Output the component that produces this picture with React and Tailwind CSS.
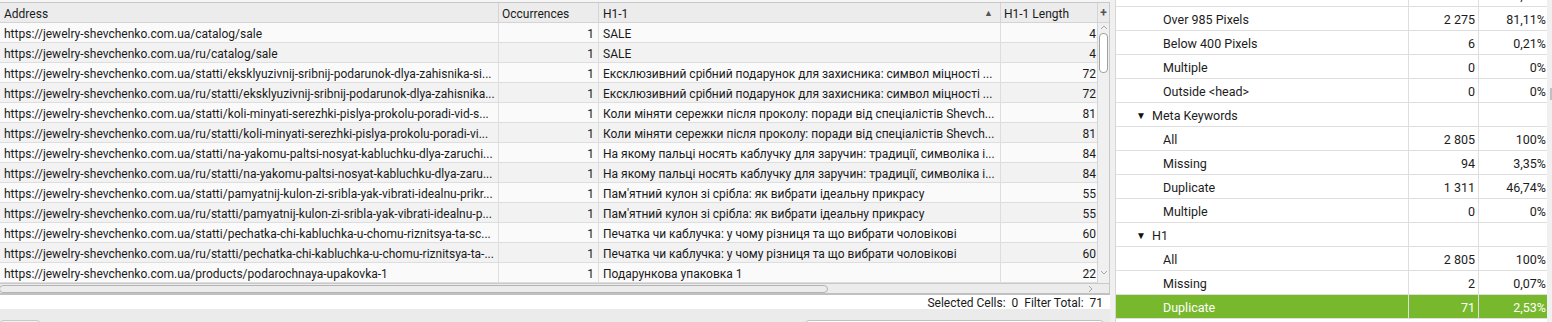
import React from "react";

const rows = [
  ["https://jewelry-shevchenko.com.ua/catalog/sale", "SALE", 4],
  ["https://jewelry-shevchenko.com.ua/ru/catalog/sale", "SALE", 4],
  ["https://jewelry-shevchenko.com.ua/statti/eksklyuzivnij-sribnij-podarunok-dlya-zahisnika-si...", "Ексклюзивний срібний подарунок для захисника: символ міцності ...", 72],
  ["https://jewelry-shevchenko.com.ua/ru/statti/eksklyuzivnij-sribnij-podarunok-dlya-zahisnika...", "Ексклюзивний срібний подарунок для захисника: символ міцності ...", 72],
  ["https://jewelry-shevchenko.com.ua/statti/koli-minyati-serezhki-pislya-prokolu-poradi-vid-s...", "Коли міняти сережки після проколу: поради від спеціалістів Shevch...", 81],
  ["https://jewelry-shevchenko.com.ua/ru/statti/koli-minyati-serezhki-pislya-prokolu-poradi-vi...", "Коли міняти сережки після проколу: поради від спеціалістів Shevch...", 81],
  ["https://jewelry-shevchenko.com.ua/statti/na-yakomu-paltsi-nosyat-kabluchku-dlya-zaruchi...", "На якому пальці носять каблучку для заручин: традиції, символіка і...", 84],
  ["https://jewelry-shevchenko.com.ua/ru/statti/na-yakomu-paltsi-nosyat-kabluchku-dlya-zaru...", "На якому пальці носять каблучку для заручин: традиції, символіка і...", 84],
  ["https://jewelry-shevchenko.com.ua/statti/pamyatnij-kulon-zi-sribla-yak-vibrati-idealnu-prikr...", "Пам'ятний кулон зі срібла: як вибрати ідеальну прикрасу", 55],
  ["https://jewelry-shevchenko.com.ua/ru/statti/pamyatnij-kulon-zi-sribla-yak-vibrati-idealnu-p...", "Пам'ятний кулон зі срібла: як вибрати ідеальну прикрасу", 55],
  ["https://jewelry-shevchenko.com.ua/statti/pechatka-chi-kabluchka-u-chomu-riznitsya-ta-sc...", "Печатка чи каблучка: у чому різниця та що вибрати чоловікові", 60],
  ["https://jewelry-shevchenko.com.ua/ru/statti/pechatka-chi-kabluchka-u-chomu-riznitsya-ta-...", "Печатка чи каблучка: у чому різниця та що вибрати чоловікові", 60],
  ["https://jewelry-shevchenko.com.ua/products/podarochnaya-upakovka-1", "Подарункова упаковка 1", 22],
];

const stats = [
  { label: "", count: "", pct: "0,00%", type: "child" },
  { label: "Over 985 Pixels", count: "2 275", pct: "81,11%", type: "child" },
  { label: "Below 400 Pixels", count: "6", pct: "0,21%", type: "child" },
  { label: "Multiple", count: "0", pct: "0%", type: "child" },
  { label: "Outside <head>", count: "0", pct: "0%", type: "child" },
  { label: "Meta Keywords", count: "", pct: "", type: "group" },
  { label: "All", count: "2 805", pct: "100%", type: "child" },
  { label: "Missing", count: "94", pct: "3,35%", type: "child" },
  { label: "Duplicate", count: "1 311", pct: "46,74%", type: "child" },
  { label: "Multiple", count: "0", pct: "0%", type: "child" },
  { label: "H1", count: "", pct: "", type: "group" },
  { label: "All", count: "2 805", pct: "100%", type: "child" },
  { label: "Missing", count: "2", pct: "0,07%", type: "child" },
  { label: "Duplicate", count: "71", pct: "2,53%", type: "child", selected: true },
];

const Chevron = ({ dir }) => {
  const d = {
    up: "M1 5 L4 2 L7 5",
    down: "M1 2 L4 5 L7 2",
    right: "M2 1 L5 4 L2 7",
  }[dir];
  return (
    <svg width="8" height="8" viewBox="0 0 8 8" className="block">
      <path d={d} fill="none" stroke="#a8a8a8" strokeWidth="1" />
    </svg>
  );
};

export default function App() {
  return (
    <div
      className="w-[1552px] h-[322px] overflow-hidden flex bg-[#f0f0f0] text-[#1a1a1a] text-[12px] leading-none"
      style={{ fontFamily: "Roboto, 'Noto Sans', Arial, sans-serif" }}
    >
      {/* LEFT PANEL */}
      <div className="w-[1110px] shrink-0 flex flex-col">
        <div className="h-[2px] bg-[#f5f5f5]" />
        <div className="border-t border-[#c8c8c8] border-r flex flex-col">
          <div className="flex">
            {/* Columns */}
            <div className="w-[1097px] shrink-0 flex flex-col">
              {/* Header */}
              <div className="h-[20px] flex bg-[#ececec] border-b border-[#d4d4d4]">
                <div className="w-[499px] shrink-0 border-r border-[#d4d4d4] px-[4px] pt-[2px] flex items-center">Address</div>
                <div className="w-[100px] shrink-0 border-r border-[#d4d4d4] px-[3px] pt-[2px] flex items-center">Occurrences</div>
                <div className="w-[402px] shrink-0 border-r border-[#d4d4d4] pl-[4px] pr-[7px] pt-[2px] flex items-center justify-between">
                  <span>H1-1</span>
                  <span className="text-[9px] text-[#555]">▲</span>
                </div>
                <div className="w-[96px] shrink-0 px-[3px] pt-[2px] flex items-center">H1-1 Length</div>
              </div>
              {/* Rows */}
              {rows.map((r, i) => (
                <div
                  key={i}
                  className={`h-[20px] flex border-b border-[#dedede] ${i % 2 === 0 ? "bg-[#fafafa]" : "bg-[#f2f2f2]"}`}
                >
                  <div className="w-[499px] shrink-0 border-r border-[#dedede] px-[4px] pt-[2px] flex items-center whitespace-nowrap overflow-hidden">{r[0]}</div>
                  <div className="w-[100px] shrink-0 border-r border-[#dedede] px-[4px] pt-[2px] flex items-center justify-end">1</div>
                  <div className="w-[402px] shrink-0 border-r border-[#dedede] px-[4px] pt-[2px] flex items-center whitespace-nowrap overflow-hidden">{r[1]}</div>
                  <div className="w-[96px] shrink-0 px-[1px] pt-[2px] flex items-center justify-end">{r[2]}</div>
                </div>
              ))}
            </div>
            {/* Vertical scrollbar */}
            <div className="w-[12px] shrink-0 flex flex-col border-l border-[#d4d4d4] bg-[#f0f0f0]">
              <div className="h-[20px] flex items-center justify-center bg-[#ececec] border-b border-[#d4d4d4] text-[12px] font-bold text-[#555]">+</div>
              <div className="h-[8px] flex items-center justify-center mt-[1px]"><Chevron dir="up" /></div>
              <div className="mx-auto w-[9px] h-[40px] rounded-[4px] border border-[#a0a0a0] bg-white mt-[1px]" />
              <div className="flex-1" />
              <div className="h-[8px] flex items-center justify-center mb-[6px]"><Chevron dir="down" /></div>
            </div>
          </div>
          {/* Horizontal scrollbar */}
          <div className="h-[10px] flex items-center border-t border-[#c8c8c8] bg-[#ececec]">
            <div className="w-[829px] h-[8px] rounded-[4px] border border-[#b4b4b4] bg-[#ececec] -ml-[1px]" />
            <div className="flex-1" />
            <div className="mr-[14px]"><Chevron dir="right" /></div>
          </div>
        </div>
        <div className="h-[2px] border-t border-b border-[#c0c0c0] bg-[#ececec]" />
        {/* Status bar */}
        <div className="h-[14px] bg-white flex items-center justify-end pr-[7px] pt-[2px] whitespace-pre text-[12px]">
          {"Selected Cells:  0  Filter Total:  71"}
        </div>
        {/* Bottom */}
        <div className="flex-1 bg-[#ebebeb] relative">
          <div className="absolute left-0 top-[11px] w-[40px] h-[10px] rounded-t-[3px] border border-[#c8c8c8] bg-[#f2f2f2]" />
          <div className="absolute left-[805px] top-[11px] w-[299px] h-[10px] rounded-t-[4px] border border-[#c0c0c0] bg-white" />
        </div>
      </div>

      {/* GAP */}
      <div className="w-[5px] shrink-0 bg-[#f0f0f0]" />

      {/* RIGHT PANEL */}
      <div className="w-[432px] shrink-0 bg-white border-l border-[#d6d6d6] overflow-hidden text-[12.5px] text-[#1c1c1c]">
        <div className="-mt-[17px]">
          {stats.map((s, i) => (
            <div
              key={i}
              className={`h-[24px] flex border-b border-[#dedede] ${s.selected ? "bg-[#77b82c] text-white" : ""}`}
            >
              <div className="w-[292px] shrink-0 flex items-center pt-[3px]">
                {s.type === "group" ? (
                  <>
                    <span className="ml-[20px] w-[16px] text-[10px] text-[#111]">▼</span>
                    <span>{s.label}</span>
                  </>
                ) : (
                  <span className="ml-[47px]">{s.label}</span>
                )}
              </div>
              <div className="w-[70px] shrink-0 border-l border-[#dedede] flex items-center justify-end pr-[3px] pt-[3px]">{s.count}</div>
              <div className="w-[70px] shrink-0 border-l border-[#dedede] flex items-center justify-end pr-[2px] pt-[3px]">{s.pct}</div>
            </div>
          ))}
        </div>
      </div>

      {/* right scrollbar */}
      <div className="w-[5px] shrink-0 bg-[#f0f0f0] flex flex-col">
        <div className="h-[88px]" />
        <div className="ml-[3px] w-[2px] h-[12px] bg-[#c0c0c0]" />
      </div>
    </div>
  );
}
